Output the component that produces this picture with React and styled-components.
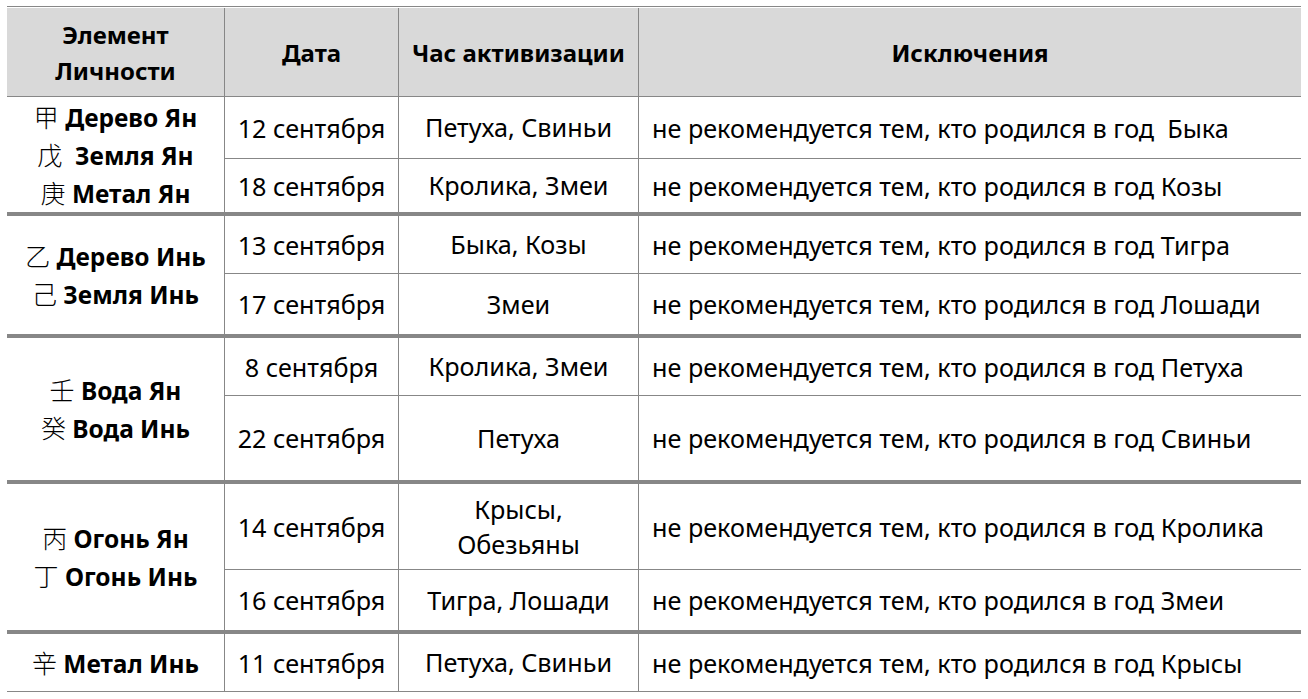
import React from "react";
import styled, { createGlobalStyle } from "styled-components";

const LINE = "#878787";

const GlobalStyle = createGlobalStyle`
  body {
    margin: 0;
    background: #fff;
    color: #000;
    font-family: "Noto Sans", "Noto Sans CJK SC", sans-serif;
  }
`;

const groups = [
  {
    elements: [
      ["甲", "Дерево Ян"],
      ["戊", " Земля Ян"],
      ["庚", "Метал Ян"],
    ],
    rows: [
      { height: 61, date: "12 сентября", hour: ["Петуха, Свиньи"], animal: " Быка" },
      { height: 54, date: "18 сентября", hour: ["Кролика, Змеи"], animal: "Козы" },
    ],
  },
  {
    elements: [
      ["乙", "Дерево Инь"],
      ["己", "Земля Инь"],
    ],
    rows: [
      { height: 57, date: "13 сентября", hour: ["Быка, Козы"], animal: "Тигра" },
      { height: 61, date: "17 сентября", hour: ["Змеи"], animal: "Лошади" },
    ],
  },
  {
    elements: [
      ["壬", "Вода Ян"],
      ["癸", "Вода Инь"],
    ],
    rows: [
      { height: 57, date: "8 сентября", hour: ["Кролика, Змеи"], animal: "Петуха" },
      { height: 85, date: "22 сентября", hour: ["Петуха"], animal: "Свиньи" },
    ],
  },
  {
    elements: [
      ["丙", "Огонь Ян"],
      ["丁", "Огонь Инь"],
    ],
    rows: [
      { height: 85, date: "14 сентября", hour: ["Крысы,", "Обезьяны"], animal: "Кролика" },
      { height: 61, date: "16 сентября", hour: ["Тигра, Лошади"], animal: "Змеи" },
    ],
  },
  {
    elements: [["辛", "Метал Инь"]],
    rows: [
      { height: 57, date: "11 сентября", hour: ["Петуха, Свиньи"], animal: "Крысы" },
    ],
  },
];

const App = () => {
  return (
    <>
      <GlobalStyle />
      <Table>
        <HeaderRow>
          <HeadCell>
            Элемент
            <br />
            Личности
          </HeadCell>
          <HeadCell $divider>Дата</HeadCell>
          <HeadCell $divider>Час активизации</HeadCell>
          <HeadCell $divider>Исключения</HeadCell>
        </HeaderRow>
        {groups.map((group, gi) => (
          <Group
            key={gi}
            $first={gi === 0}
            $rows={group.rows.map((r) => `${r.height}px`).join(" ")}
          >
            <ElementCell>
              {group.elements.map(([glyph, name]) => (
                <ElementLine key={name}>
                  <Glyph>{glyph}</Glyph> <b>{name}</b>
                </ElementLine>
              ))}
            </ElementCell>
            {group.rows.map((row, ri) => (
              <React.Fragment key={row.date}>
                <Cell $col={2} $top={ri > 0}>
                  {row.date}
                </Cell>
                <Cell $col={3} $top={ri > 0}>
                  <HourText>
                    {row.hour.map((h) => (
                      <span key={h}>{h}</span>
                    ))}
                  </HourText>
                </Cell>
                <NoteCell $top={ri > 0}>
                  не рекомендуется тем, кто родился в год {row.animal}
                </NoteCell>
              </React.Fragment>
            ))}
          </Group>
        ))}
      </Table>
    </>
  );
};

const columns = "217px 174px 240px 663px";

const Table = styled.div`
  width: 1294px;
  margin: 6px 0 0 7px;
  border-top: 1px solid ${LINE};
  border-bottom: 1px solid ${LINE};
  padding-top: 1px;
  font-size: 25.2px;
`;

const HeaderRow = styled.div`
  display: grid;
  grid-template-columns: ${columns};
  height: 89px;
  background: #d9d9d9;
  border-bottom: 1px solid ${LINE};
  box-sizing: border-box;
  font-size: 24px;
`;

const HeadCell = styled.div`
  display: flex;
  align-items: center;
  justify-content: center;
  text-align: center;
  font-weight: 700;
  line-height: 36px;
  padding-top: 2px;
  border-left: ${(p) => (p.$divider ? `1px solid ${LINE}` : "none")};
`;

const Group = styled.div`
  display: grid;
  grid-template-columns: ${columns};
  grid-template-rows: ${(p) => p.$rows};
  border-top: ${(p) => (p.$first ? "none" : `4px solid ${LINE}`)};
`;

const ElementCell = styled.div`
  grid-column: 1;
  grid-row: 1 / -1;
  display: flex;
  flex-direction: column;
  align-items: center;
  justify-content: center;
  line-height: 37px;
  font-size: 24.5px;
`;

const ElementLine = styled.div`
  white-space: pre;
  b {
    font-weight: 700;
  }
`;

const Glyph = styled.span`
  font-family: "Noto Sans CJK SC", sans-serif;
  font-weight: 300;
  font-size: 25px;
`;

const Cell = styled.div`
  grid-column: ${(p) => p.$col};
  display: flex;
  align-items: center;
  justify-content: center;
  text-align: center;
  border-left: 1px solid ${LINE};
  border-top: ${(p) => (p.$top ? `1px solid ${LINE}` : "none")};
  box-sizing: border-box;
`;

const HourText = styled.div`
  display: flex;
  flex-direction: column;
  line-height: 35px;
`;

const NoteCell = styled(Cell).attrs({ $col: 4 })`
  justify-content: flex-start;
  text-align: left;
  padding-left: 13px;
  white-space: pre;
`;

export default App;
